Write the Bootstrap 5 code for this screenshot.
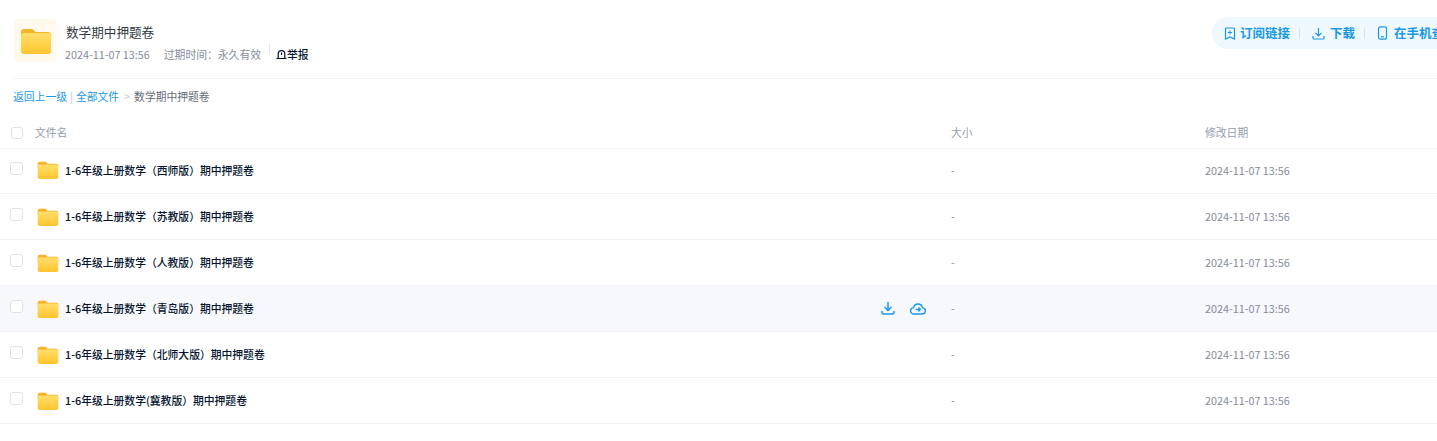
<!DOCTYPE html>
<html lang="zh-CN">
<head>
    <meta charset="UTF-8">
    <meta name="viewport" content="width=device-width, initial-scale=1.0">
    <title>数学期中押题卷</title>
    <link href="https://cdn.jsdelivr.net/npm/bootstrap@5.3.0/dist/css/bootstrap.min.css" rel="stylesheet">
    <script src="https://cdn.jsdelivr.net/npm/bootstrap@5.3.0/dist/js/bootstrap.bundle.min.js"></script>
    <style>
        html, body {
            overflow: hidden;
            height: 441px;
        }
        body {
            font-family: "Noto Sans CJK SC", "Noto Sans", sans-serif;
            font-size: 10.8px;
            color: #06142e;
            background: #fff;
        }
        .share-head {
            margin-left: 14px;
            height: 79px;
            padding-top: 17px;
            border-bottom: 1px solid #f1f2f5;
            width: 1500px;
        }
        .share-info {
            width: 1198px;
            flex: none;
        }
        .share-icon {
            width: 43px;
            height: 43px;
            margin-top: 2px;
            margin-right: 9px;
            border-radius: 5px;
            background: #fff9ed;
        }
        .share-title {
            font-size: 12.6px;
            line-height: 18px;
            color: #33383f;
            margin-top: 6px;
        }
        .share-meta {
            color: #848c9c;
            line-height: 16px;
            margin-top: 5px;
            margin-left: -1px;
        }
        .meta-date {
            margin-right: 14px;
        }
        .share-report {
            color: #06142e;
            padding-left: 7px;
            margin-left: 8px;
            line-height: 14px;
            position: relative;
            font-weight: 500;
        }
        .share-report::before {
            content: "";
            position: absolute;
            left: 0;
            top: -3px;
            height: 11px;
            width: 1px;
            background: #e4e6ea;
        }
        .share-tools {
            flex: none;
            height: 32px;
            padding-left: 12px;
            width: 300px;
            border-radius: 16px 0 0 16px;
            background: #eff8ff;
            color: #1a98e8;
            font-size: 12.5px;
            font-weight: 700;
        }
        .tool-sep {
            width: 1px;
            height: 11px;
            background: #d3e3ee;
            margin: 0 12px 0 9px;
        }
        .tool-icon {
            margin-right: 5px;
            flex: none;
        }
        .crumbs {
            height: 37px;
            padding-left: 13px;
            padding-bottom: 2px;
            color: #656b76;
        }
        .crumbs a {
            color: #1a98e8;
            text-decoration: none;
        }
        .crumb-bar {
            color: #9fcbe8;
            margin: 0 3px;
        }
        .crumb-arrow {
            color: #c3c7cf;
            margin: 0 4px 0 5px;
        }
        .file-row {
            display: grid;
            grid-template-columns: 951px 254px 1fr;
            height: 46px;
            align-items: center;
            border-bottom: 1px solid #f1f2f5;
            color: #848c9c;
        }
        .file-row:nth-child(2) {
            height: 45px;
            padding-bottom: 2px;
        }
        .file-head {
            height: 33px;
            color: #959caa;
        }
        .file-hover {
            background: #f7f8fc;
        }
        .file-name {
            padding-left: 10px;
            color: #06142e;
            font-weight: 500;
        }
        .file-head .file-name {
            color: #959caa;
            font-weight: 400;
        }
        .file-check {
            width: 13px;
            height: 13px;
            border: 1px solid #dfe1e6;
            border-radius: 3px;
            background: #fff;
            margin-top: -5px;
            margin-right: 14px;
            flex: none;
        }
        .file-row:nth-child(2) .file-check {
            margin-top: -3px;
        }
        .file-head .file-check {
            margin: 1px 12px 0 1px;
            width: 12px;
            height: 12px;
        }
        .file-folder {
            width: 22px;
            height: 20px;
            margin-right: 6px;
            flex: none;
        }
        .file-actions {
            gap: 15px;
            padding-right: 25px;
            margin-top: -1px;
        }
    </style>
</head>
<body>
    <svg width="0" height="0" class="d-block">
        <defs>
            <linearGradient id="folderFill" x1="0" y1="0" x2="0" y2="1">
                <stop offset="0" stop-color="#ffdf6b"/>
                <stop offset="1" stop-color="#ffc42e"/>
            </linearGradient>
            <symbol id="folderIcon" viewBox="0 0 32 28">
                <path d="M1 5a3 3 0 0 1 3-3h7c1.500 0 2.300 .6 3.200 1.600L15.500 5H28a3 3 0 0 1 3 3v3H1z" fill="#fbb22b"/>
                <path d="M1 9a3 3 0 0 1 3-3h24a3 3 0 0 1 3 3v15a3 3 0 0 1-3 3H4a3 3 0 0 1-3-3z" fill="url(#folderFill)"/>
            </symbol>
        </defs>
    </svg>

    <div class="share-head d-flex">
        <div class="share-info d-flex">
            <div class="share-icon d-flex align-items-center justify-content-center">
                <svg width="32" height="28"><use href="#folderIcon"/></svg>
            </div>
            <div>
                <div class="share-title">数学期中押题卷</div>
                <div class="share-meta d-flex align-items-center">
                    <span class="meta-date">2024-11-07 13:56</span>
                    <span>过期时间：永久有效</span>
                    <span class="share-report d-flex align-items-center">
                        <svg width="11" height="11" viewBox="0 0 11 11" fill="none" stroke="#06142e" stroke-width="1.200"><path d="M.5 9.500h10M2.200 9.500V5a3.300 3.300 0 0 1 6.600 0v4.500"/><path d="M5.500 3.500v2.500"/></svg>
                        <span>举报</span>
                    </span>
                </div>
            </div>
        </div>
        <div class="share-tools d-flex align-items-center">
            <svg class="me-1 flex-shrink-0" width="12" height="13" viewBox="0 0 12 13" fill="none" stroke="#1a98e8" stroke-width="1.200"><path d="M1.500 2a1 1 0 0 1 1-1h7a1 1 0 0 1 1 1v10L6 10l-4.500 2z"/><path d="M6 3.500v4M4 5.500h4"/></svg>
            <span>订阅链接</span>
            <span class="tool-sep"></span>
            <svg class="tool-icon" width="13" height="13" viewBox="0 0 13 13" fill="none" stroke="#1a98e8" stroke-width="1.200"><path d="M6.500 1v7.500M3.500 5.800l3 3 3-3M1 9v2a1 1 0 0 0 1 1h9a1 1 0 0 0 1-1V9"/></svg>
            <span>下载</span>
            <span class="tool-sep"></span>
            <svg class="tool-icon" width="12" height="14" viewBox="0 0 12 14" fill="none" stroke="#1a98e8" stroke-width="1.200"><rect x="1.500" y=".8" width="8" height="12.400" rx="2"/><path d="M4 10.800h3"/></svg>
            <span>在手机查看</span>
        </div>
    </div>

    <div class="crumbs d-flex align-items-center">
        <a href="#">返回上一级</a>
        <span class="crumb-bar">|</span>
        <a href="#">全部文件</a>
        <span class="crumb-arrow">&gt;</span>
        <span>数学期中押题卷</span>
    </div>

    <div id="fileList"></div>

    <script>
        const files = [
            '1-6年级上册数学（西师版）期中押题卷',
            '1-6年级上册数学（苏教版）期中押题卷',
            '1-6年级上册数学（人教版）期中押题卷',
            '1-6年级上册数学（青岛版）期中押题卷',
            '1-6年级上册数学（北师大版）期中押题卷',
            '1-6年级上册数学(冀教版）期中押题卷'
        ];

        const actions = `
            <div class="file-actions d-flex ms-auto align-items-center">
                <svg width="14" height="14" viewBox="0 0 14 14" fill="none" stroke="#1a98e8" stroke-width="1.500"><path d="M7 1v8M3.500 6l3.500 3.500L10.500 6M1 10v1.500A1.500 1.500 0 0 0 2.500 13h9a1.500 1.500 0 0 0 1.500-1.500V10"/></svg>
                <svg width="16" height="13" viewBox="0 0 16 13" fill="none" stroke="#1a98e8" stroke-width="1.400"><path d="M4.200 12H4a3.200 3.200 0 0 1-.4-6.400 4.500 4.500 0 0 1 8.800 0A3.200 3.200 0 0 1 12 12z"/><path d="M5.500 7.500h5M8.300 5.500l2 2-2 2"/></svg>
            </div>`;

        let html = `
            <div class="file-row file-head">
                <div class="file-name d-flex align-items-center"><span class="file-check"></span><span>文件名</span></div>
                <div>大小</div>
                <div>修改日期</div>
            </div>`;

        files.forEach((name, index) => {
            html += `
            <div class="file-row ${index === 3 ? 'file-hover' : ''}">
                <div class="file-name d-flex align-items-center">
                    <span class="file-check"></span>
                    <svg class="file-folder"><use href="#folderIcon"/></svg>
                    <span>${name}</span>
                    ${index === 3 ? actions : ''}
                </div>
                <div>-</div>
                <div>2024-11-07 13:56</div>
            </div>`;
        });

        document.getElementById('fileList').innerHTML = html;
    </script>
</body>
</html>
